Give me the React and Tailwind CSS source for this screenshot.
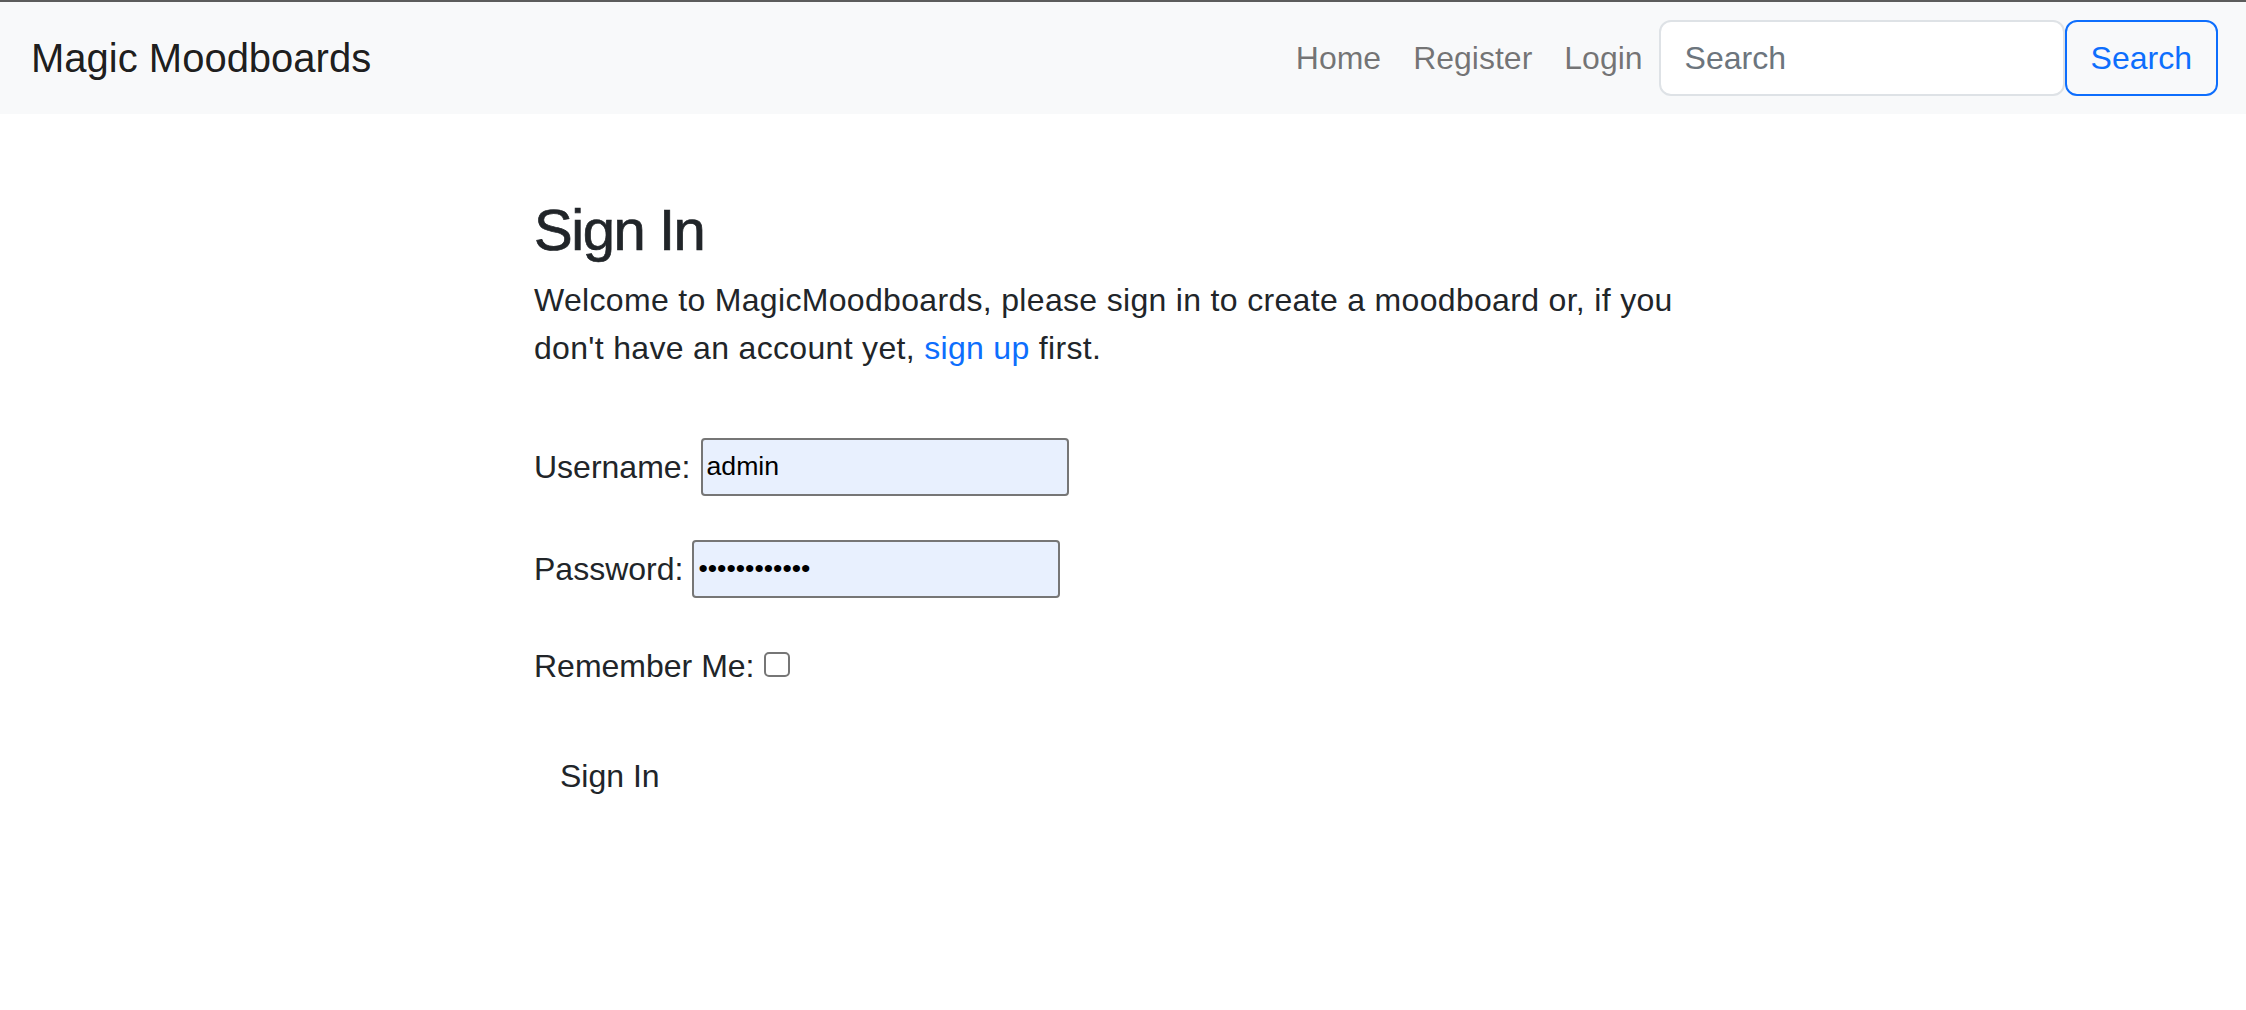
import React from "react";

export default function App() {
  return (
    <div className="min-h-screen bg-white font-['Liberation_Sans',Arial,sans-serif] text-[#212529]">
      <div className="border-t-2 border-[#5c5c5c]">
        <nav className="flex items-center bg-[#f8f9fa] pl-[31px] pr-[28px] py-4">
          <a href="#" className="py-[10px] text-[40px] leading-[60px] text-[rgba(0,0,0,0.9)]">
            Magic Moodboards
          </a>
          <div className="ml-auto flex items-center">
            <ul className="flex">
              {["Home", "Register", "Login"].map((t) => (
                <li key={t}>
                  <a href="#" className="block px-4 py-4 text-[32px] leading-[48px] text-[rgba(0,0,0,0.55)]">
                    {t}
                  </a>
                </li>
              ))}
            </ul>
            <form className="flex" onSubmit={(e) => e.preventDefault()}>
              <input
                type="search"
                placeholder="Search"
                className="h-[76px] w-[406px] rounded-[12px] border-2 border-[#dee2e6] bg-white px-[24px] text-[32px] text-[#212529] outline-none placeholder:text-[#6c757d]"
              />
              <button
                type="submit"
                className="h-[76px] rounded-[12px] border-2 border-[#0d6efd] px-[24px] text-[32px] leading-[48px] text-[#0d6efd]"
              >
                Search
              </button>
            </form>
          </div>
        </nav>
      </div>

      <main className="mx-auto w-[1178px] pt-[81px]">
        <h2 className="mb-[11px] text-[58px] font-medium leading-[1.2] tracking-[-0.025em] [-webkit-text-stroke:0.7px_#212529]">
          Sign In
        </h2>
        <p className="text-[32px] leading-[48px] tracking-[0.01em]">
          Welcome to MagicMoodboards, please sign in to create a moodboard or, if you
          <br />
          don't have an account yet,{" "}
          <a href="#" className="text-[#0d6efd]">
            sign up
          </a>{" "}
          first.
        </p>

        <form className="mt-[66px] flex flex-col" onSubmit={(e) => e.preventDefault()}>
          <div className="flex items-center text-[32px] leading-[48px]">
            <label>Username:</label>
            <input
              type="text"
              defaultValue="admin"
              className="ml-[10px] h-[58px] w-[368px] rounded-[4px] border-2 border-[#767676] bg-[#e8f0fe] px-[4px] text-[26.67px] text-black outline-none"
            />
          </div>
          <div className="mt-[44px] flex items-center text-[32px] leading-[48px]">
            <label>Password:</label>
            <input
              type="password"
              defaultValue="adminpasswd1"
              className="ml-[9px] h-[58px] w-[368px] rounded-[4px] border-2 border-[#767676] bg-[#e8f0fe] px-[4px] text-[26.67px] text-black outline-none"
            />
          </div>
          <div className="mt-[44px] flex items-start text-[32px] leading-[48px]">
            <label>Remember Me:</label>
            <input
              type="checkbox"
              className="ml-[9px] mt-[10px] h-[25px] w-[26px] appearance-none rounded-[5px] border-2 border-[#767676] bg-white"
            />
          </div>
          <div className="mt-[48px]">
            <button
              type="submit"
              className="rounded-[12px] border-2 border-transparent px-[24px] py-[12px] text-[32px] leading-[48px] text-[#212529]"
            >
              Sign In
            </button>
          </div>
        </form>
      </main>
    </div>
  );
}
